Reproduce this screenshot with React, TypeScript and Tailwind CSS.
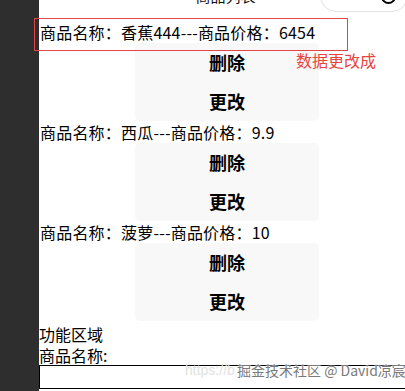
import React from 'react';

interface Goods {
  name: string;
  price: string;
}

const list: Goods[] = [
  { name: '香蕉444', price: '6454' },
  { name: '西瓜', price: '9.9' },
  { name: '菠萝', price: '10' },
];

const font = { fontFamily: '"Microsoft YaHei", "Noto Sans CJK SC", sans-serif' };

const GoodsItem: React.FC<{ data: Goods }> = ({ data }) => {
  return (
    <div className="flex flex-col">
      <div className="h-[22px] leading-[22px] text-[16px] text-black pl-[1px] whitespace-nowrap tracking-[0.2px]">
        商品名称：{data.name}---商品价格：{data.price}
      </div>
      <div className="ml-[96px] w-[184px] flex flex-col rounded-[5px] bg-[#f8f8f8]">
        <button className="h-[39px] text-[18px] font-bold text-black">删除</button>
        <button className="h-[39px] text-[18px] font-bold text-black">更改</button>
      </div>
    </div>
  );
};

export default function App() {
  return (
    <div className="w-[405px] h-[391px] overflow-hidden relative bg-white flex" style={font}>
      <div className="w-[39px] shrink-0 bg-[#2e2e2e]"></div>
      <div className="flex-1 flex flex-col min-w-0">
        {/* nav bar, mostly scrolled off */}
        <div className="h-[21px] overflow-hidden shrink-0">
          <div className="-mt-[20px] h-[32px] flex items-center">
            <div className="flex-1 text-center text-[15px] text-[#111] pl-[92px]">商品列表</div>
            <div className="w-[88px] h-[32px] -mr-[3px] rounded-full border border-[#e3e3e3] flex items-center justify-end pr-[11px]">
              <div className="w-[15px] h-[15px] rounded-full border-[2.5px] border-black"></div>
            </div>
          </div>
        </div>

        {list.map((item) => (
          <GoodsItem key={item.name} data={item} />
        ))}

        <div className="mt-[3px] h-[21px] leading-[21px] text-[16px] text-black">功能区域</div>
        <div className="h-[20px] leading-[20px] text-[16px] text-black">商品名称:</div>
        <div className="h-[24px] border border-black -mr-[4px]"></div>
      </div>

      {/* annotation */}
      <div className="absolute left-[34px] top-[18px] w-[314px] h-[33px] border border-[#e04848]"></div>
      <div className="absolute left-[296px] top-[50px] text-[16px] leading-[20px] text-[#e8443f]">数据更改成</div>

      {/* watermark */}
      <div className="absolute left-[185px] top-[361px] text-[14px] leading-[18px] text-[#e2e2e2] whitespace-nowrap" style={{ fontFamily: '"Liberation Sans", sans-serif' }}>
        https://b
      </div>
      <div
        className="absolute left-[237px] top-[361px] text-[14px] leading-[18px] text-[#7a7a7a] whitespace-nowrap"
        style={{ textShadow: '0 0 2px #fff, 0 0 2px #fff' }}
      >
        掘金技术社区 @ David凉宸
      </div>
    </div>
  );
}
